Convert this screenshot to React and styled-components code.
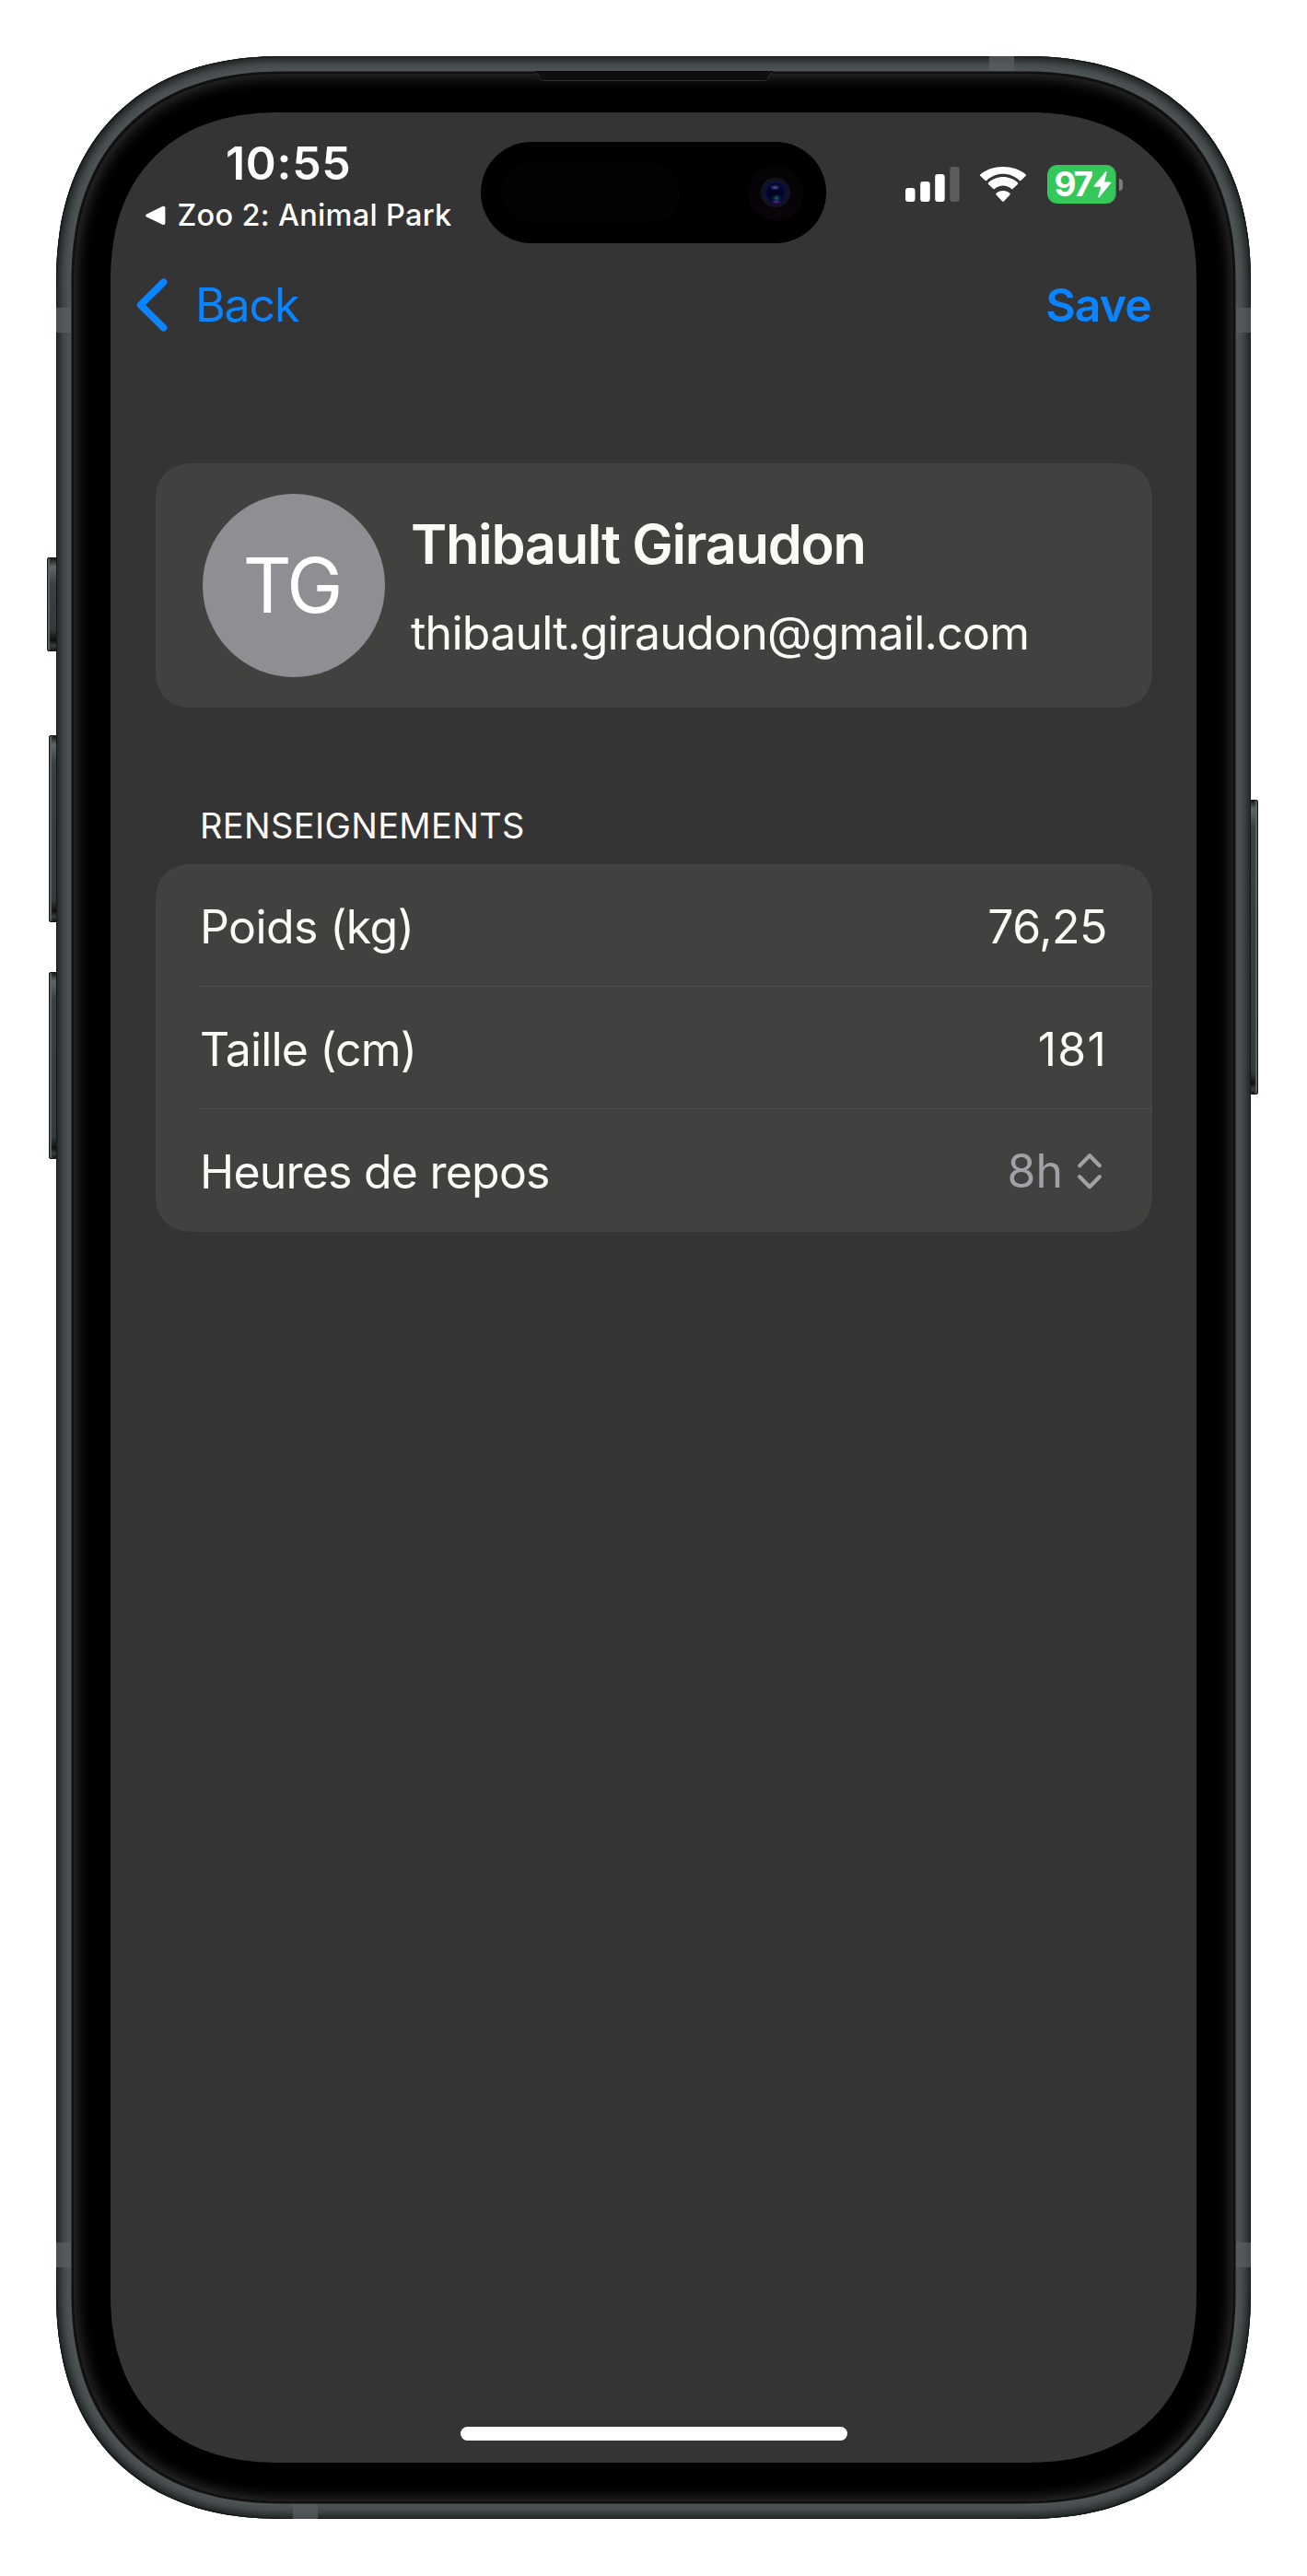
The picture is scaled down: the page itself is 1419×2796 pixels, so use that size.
import React from "react";
import styled, { createGlobalStyle } from "styled-components";

const GlobalStyle = createGlobalStyle`
  * { box-sizing: border-box; }
  body {
    margin: 0;
    background: #ffffff;
    font-family: Inter, "Liberation Sans", sans-serif;
  }
`;

const ink = "#fbfaf6";
const blue = "#0a84ff";

/* ---------- device ---------- */

const Page = styled.main`
  width: 1419px;
  height: 2796px;
  padding: 61px 61px 62px;
`;

const Device = styled.div`
  position: relative;
  width: 1297px;
  height: 2673px;
`;

const Frame = styled.div`
  position: relative;
  width: 100%;
  height: 100%;
  padding: 18px;
  border-radius: 246px;
  corner-shape: superellipse(1.2);
  background: #505657;
  box-shadow:
    inset 0 0 0 1px #141718,
    inset 0 0 9px 3px #1b1f20,
    inset 0 0 16px 3px #2b3031;
`;

const Glass = styled.div`
  width: 100%;
  height: 100%;
  padding: 43px 41px;
  border-radius: 229px;
  corner-shape: superellipse(1.2);
  background: #000000;
  box-shadow:
    0 0 0 1.5px #111313,
    inset 0 0 0 1px #0d0d0d,
    inset 0 0 15px 4px #303030;
`;

const Screen = styled.div`
  display: flex;
  flex-direction: column;
  width: 1179px;
  height: 2551px;
  overflow: hidden;
  border-radius: 184px;
  corner-shape: superellipse(1.2);
  background: #343434;
`;

const SideButton = styled.span`
  position: absolute;
  top: ${(p) => p.$top}px;
  ${(p) => p.$side}: -${(p) => p.$depth}px;
  width: ${(p) => p.$depth + 4}px;
  height: ${(p) => p.$length}px;
  border-radius: 3px;
  background: linear-gradient(
    to bottom,
    #0c0e0e 0,
    #5f6668 10px,
    #3a4041 30px,
    #343a3b calc(100% - 24px),
    #0e1010 calc(100% - 12px),
    #3a3e3f calc(100% - 6px),
    #0c0e0e 100%
  );
  box-shadow:
    inset 0 0 0 1px #16191a,
    inset ${(p) => (p.$side === "left" ? 3 : -3)}px 0 1px 0 #5c6263;
`;

const AntennaBand = styled.span`
  position: absolute;
  top: ${(p) => p.$top}px;
  left: ${(p) => p.$left}px;
  width: ${(p) => (p.$vertical ? 27 : 16)}px;
  height: ${(p) => (p.$vertical ? 16 : 27)}px;
  background: #5a6061;
  opacity: 0.7;
`;

const Earpiece = styled.svg`
  position: absolute;
  top: 15px;
  left: 519px;
`;

/* ---------- status bar ---------- */

const StatusBar = styled.header`
  flex: none;
  display: grid;
  grid-template-columns: 402px 375px 1fr;
  height: 160px;
  color: #ffffff;
`;

const StatusLeft = styled.div`
  display: flex;
  flex-direction: column;
  align-items: flex-start;
  gap: 7px;
  padding: 25px 0 0 38px;
`;

const Clock = styled.time`
  margin-left: 87px;
  font-size: 50px;
  line-height: 60px;
  font-weight: 600;
  letter-spacing: 0.7px;
`;

const ReturnLink = styled.div`
  display: flex;
  align-items: center;
  gap: 12.5px;
  font-size: 32.5px;
  line-height: 40px;
  font-weight: 500;
  letter-spacing: 0.3px;
  white-space: nowrap;
`;

const Island = styled.div`
  display: flex;
  align-items: center;
  justify-content: space-between;
  height: 110px;
  margin-top: 32px;
  padding: 0 25px 0 22px;
  border-radius: 55px;
  background: #000000;
`;

const Sensor = styled.div`
  width: 194px;
  height: 66px;
  border-radius: 33px;
  background: #030303;
`;

const Lens = styled.div`
  display: grid;
  place-items: center;
  width: 60px;
  height: 60px;
  border-radius: 50%;
  background: linear-gradient(#030304, #0b030b);
`;

const StatusRight = styled.div`
  display: flex;
  align-items: center;
  height: 42px;
  margin-top: 57px;
  padding-left: 85.5px;
`;

const WifiSlot = styled.span`
  display: flex;
  margin: 0 22px 0 21px;
`;

const Battery = styled.div`
  display: flex;
  align-items: center;
  gap: 2px;
  width: 75px;
  height: 42px;
  padding-left: 8px;
  border-radius: 11px;
  background: #34c759;
  box-shadow: inset -1px 0 0 #5c6b60;
  font-size: 37px;
  line-height: 42px;
  font-weight: 700;
  letter-spacing: -2.2px;
`;

const BatteryNub = styled.span`
  width: 4px;
  height: 13px;
  margin-left: 3px;
  border-radius: 0 5px 5px 0;
  background: #7c7c7c;
`;

/* ---------- navigation ---------- */

const NavBar = styled.nav`
  flex: none;
  display: flex;
  align-items: center;
  justify-content: space-between;
  height: 98px;
  padding: 0 49px 0 28px;
`;

const NavButton = styled.button`
  display: flex;
  align-items: center;
  gap: 30px;
  padding: 0;
  border: 0;
  background: none;
  color: ${blue};
  font: ${(p) => (p.$strong ? 600 : 400)} 50px/60px Inter, "Liberation Sans", sans-serif;
  letter-spacing: ${(p) => (p.$strong ? "-0.9px" : "-1.1px")};
`;

/* ---------- form ---------- */

const Content = styled.section`
  flex: 1;
  padding: 123px 48px 0 49px;
  color: ${ink};
`;

const Card = styled.div`
  border-radius: 40px;
  corner-shape: superellipse(1.2);
  background: #41413f;
`;

const ProfileCard = styled(Card)`
  display: flex;
  align-items: center;
  gap: 28px;
  height: 265px;
  padding-left: 51px;
`;

const Avatar = styled.div`
  flex: none;
  width: 198px;
  height: 199px;
  padding-right: 5px;
  border-radius: 50%;
  background: #8e8e93;
  color: #ffffff;
  font-size: 82px;
  line-height: 200px;
  letter-spacing: -3px;
  text-align: center;
`;

const Identity = styled.div`
  display: flex;
  flex-direction: column;
  gap: 31px;
  white-space: nowrap;
`;

const Name = styled.h1`
  margin: 0;
  font-size: 59.5px;
  line-height: 72px;
  font-weight: 600;
  letter-spacing: -1.3px;
`;

const Email = styled.p`
  margin: 0;
  font-size: 50px;
  line-height: 60px;
  letter-spacing: -0.75px;
`;

const SectionTitle = styled.h2`
  margin: 105px 0 19px;
  padding-left: 48px;
  font-size: 38px;
  line-height: 46px;
  font-weight: 400;
  letter-spacing: 0.35px;
`;

const Row = styled.div`
  position: relative;
  display: flex;
  align-items: center;
  justify-content: space-between;
  height: 133px;
  padding: 2px 49px 0 48px;
  font-size: 50px;
  line-height: 60px;

  &:not(:last-child)::after {
    content: "";
    position: absolute;
    left: 47px;
    right: 0;
    bottom: 0;
    height: 1px;
    background: #4d4d4d;
  }
`;

const Label = styled.span`
  letter-spacing: ${(p) => p.$tracking}px;
`;

const Value = styled.span`
  letter-spacing: ${(p) => p.$tracking}px;
`;

const Picker = styled.span`
  display: flex;
  align-items: center;
  gap: 15px;
  margin: -2px 5px 0 0;
  color: #a3a1a8;
`;

const HomeIndicator = styled.div`
  flex: none;
  align-self: center;
  width: 420px;
  height: 15px;
  margin-bottom: 24px;
  border-radius: 8px;
  background: #ffffff;
`;

/* ---------- icons ---------- */

const ReturnTriangle = () => (
  <svg width="22" height="22" viewBox="0 0 22 22" fill="#fff">
    <path d="M1.2 9.4 18.4 0.9C20 .2 21.4 1 21.4 2.6V19c0 1.7-1.4 2.5-3 1.800L1.200 12.400C-.3 11.600-.3 10.200 1.200 9.400Z" />
  </svg>
);

const Camera = () => (
  <svg width="34" height="34" viewBox="0 0 34 34">
    <defs>
      <radialGradient id="lens">
        <stop offset="0" stopColor="#02031a" />
        <stop offset=".7" stopColor="#04042a" />
        <stop offset="1" stopColor="#0e1148" />
      </radialGradient>
      <radialGradient id="glintTop">
        <stop offset="0" stopColor="#5b63b8" />
        <stop offset="1" stopColor="#20235f" stopOpacity="0" />
      </radialGradient>
      <radialGradient id="glintGreen">
        <stop offset="0" stopColor="#0b6a70" />
        <stop offset="1" stopColor="#083a48" stopOpacity="0" />
      </radialGradient>
      <radialGradient id="glintViolet">
        <stop offset="0" stopColor="#7a2a9a" />
        <stop offset="1" stopColor="#3a1060" stopOpacity="0" />
      </radialGradient>
    </defs>
    <circle cx="17" cy="17" r="16.400" fill="#10121f" />
    <circle cx="17" cy="17" r="12" fill="url(#lens)" />
    <ellipse cx="16.500" cy="11.500" rx="6.500" ry="3.500" fill="url(#glintTop)" />
    <ellipse cx="18" cy="23" rx="6" ry="4.500" fill="url(#glintGreen)" />
    <ellipse cx="17.500" cy="27" rx="5.500" ry="2.500" fill="url(#glintViolet)" />
  </svg>
);

const Signal = () => (
  <svg width="59" height="38" viewBox="0 0 59 38" fill="#fff">
    <rect x="0" y="23" width="10.500" height="15" rx="3" />
    <rect x="16.200" y="16" width="10.500" height="22" rx="3" />
    <rect x="32.200" y="8" width="10.500" height="30" rx="3" />
    <rect x="48.300" y="0" width="10.300" height="38" rx="3" fill="#5d5d5d" />
  </svg>
);

const Wifi = () => (
  <svg width="52" height="38" viewBox="0 0 52 38" fill="#fff">
    <path d="M26 7.800c6.900 0 13.200 2.700 17.900 7.200.4.400 1 .4 1.400 0l5.300-5c.6-.5.6-1.300 0-1.800C44 2.900 35.300 0 26 0S8 2.900 1.400 8.200c-.6.500-.6 1.300 0 1.800l5.300 5c.4.400 1 .4 1.400 0C12.800 10.500 19.100 7.800 26 7.800Z" />
    <path d="M26 20.500c3.500 0 6.700 1.300 9.200 3.500.4.400 1 .4 1.400 0l5.300-5.100c.5-.5.5-1.200 0-1.700C37.600 13.400 32 11.100 26 11.100s-11.600 2.300-15.900 6.100c-.5.500-.5 1.200 0 1.700l5.300 5.100c.4.400 1 .4 1.400 0 2.500-2.200 5.700-3.500 9.200-3.500Z" />
    <path d="M33.400 28.700c.5.500.5 1.200 0 1.700L26.900 37.600c-.5.500-1.300.5-1.800 0l-6.500-7.200c-.5-.5-.5-1.200 0-1.700C20.600 27 23.200 26 26 26s5.400 1 7.400 2.700Z" />
  </svg>
);

const Bolt = () => (
  <svg width="20" height="29" viewBox="0 0 20 29" fill="#fff">
    <path d="M13.200.3c.6-.7 1.600-.2 1.400.7l-2.500 10.400h6.300c.8 0 1.200.8.700 1.400L6.500 28.200c-.6.700-1.700.2-1.400-.7L8.300 16.800H1.400c-.8 0-1.200-.8-.7-1.400L13.200.3Z" />
  </svg>
);

const BackChevron = () => (
  <svg width="34" height="58" viewBox="0 0 34 58" fill="none" stroke={blue} strokeWidth="7.600" strokeLinecap="round" strokeLinejoin="round">
    <path d="M29.600 4.200 4.600 29l25 24.800" />
  </svg>
);

const UpDownChevron = () => (
  <svg width="28" height="40" viewBox="0 0 28 40" fill="none" stroke="#a3a1a8" strokeWidth="4.200" strokeLinecap="round" strokeLinejoin="round">
    <path d="M3.200 14.200 14 3.200l10.800 11" />
    <path d="M3.200 26.200 14 37.200l10.800-11" />
  </svg>
);

export default function App() {
  return (
    <>
      <GlobalStyle />
      <Page>
        <Device>
          <SideButton $side="left" $depth={10} $top={544} $length={102} />
          <SideButton $side="left" $depth={8} $top={737} $length={203} />
          <SideButton $side="left" $depth={8} $top={994} $length={203} />
          <SideButton $side="right" $depth={8} $top={807} $length={320} />
          <Frame>
            <AntennaBand $top={273} $left={0} />
            <AntennaBand $top={273} $left={1281} />
            <AntennaBand $top={2373} $left={0} />
            <AntennaBand $top={2373} $left={1281} />
            <AntennaBand $vertical $top={0} $left={1013} />
            <AntennaBand $vertical $top={2657} $left={257} />
            <Glass>
              <Screen>
                <StatusBar>
                  <StatusLeft>
                    <Clock>10:55</Clock>
                    <ReturnLink>
                      <ReturnTriangle />
                      Zoo 2: Animal Park
                    </ReturnLink>
                  </StatusLeft>
                  <Island>
                    <Sensor />
                    <Lens>
                      <Camera />
                    </Lens>
                  </Island>
                  <StatusRight>
                    <Signal />
                    <WifiSlot>
                      <Wifi />
                    </WifiSlot>
                    <Battery>
                      97
                      <Bolt />
                    </Battery>
                    <BatteryNub />
                  </StatusRight>
                </StatusBar>
                <NavBar>
                  <NavButton>
                    <BackChevron />
                    Back
                  </NavButton>
                  <NavButton $strong>Save</NavButton>
                </NavBar>
                <Content>
                  <ProfileCard>
                    <Avatar>TG</Avatar>
                    <Identity>
                      <Name>Thibault Giraudon</Name>
                      <Email>thibault.giraudon@gmail.com</Email>
                    </Identity>
                  </ProfileCard>
                  <SectionTitle>RENSEIGNEMENTS</SectionTitle>
                  <Card>
                    <Row>
                      <Label $tracking={-0.6}>Poids (kg)</Label>
                      <Value $tracking={-0.5}>76,25</Value>
                    </Row>
                    <Row>
                      <Label $tracking={-0.85}>Taille (cm)</Label>
                      <Value $tracking={1.2}>181</Value>
                    </Row>
                    <Row>
                      <Label $tracking={-0.78}>Heures de repos</Label>
                      <Picker>
                        8h
                        <UpDownChevron />
                      </Picker>
                    </Row>
                  </Card>
                </Content>
                <HomeIndicator />
              </Screen>
            </Glass>
            <Earpiece width="260" height="13" viewBox="0 0 260 13">
              <path d="M1 3.500c3 0 3.500 1 4.500 4 1 3 2 4 5 4h239c3 0 4-1 5-4 1-3 1.500-4 4.500-4V1H1Z" fill="#0d0e0e" />
              <path d="M1 3.500c3 0 3.500 1 4.500 4 1 3 2 4 5 4h239c3 0 4-1 5-4 1-3 1.500-4 4.500-4" fill="none" stroke="#2e2e2e" />
            </Earpiece>
          </Frame>
        </Device>
      </Page>
    </>
  );
}
